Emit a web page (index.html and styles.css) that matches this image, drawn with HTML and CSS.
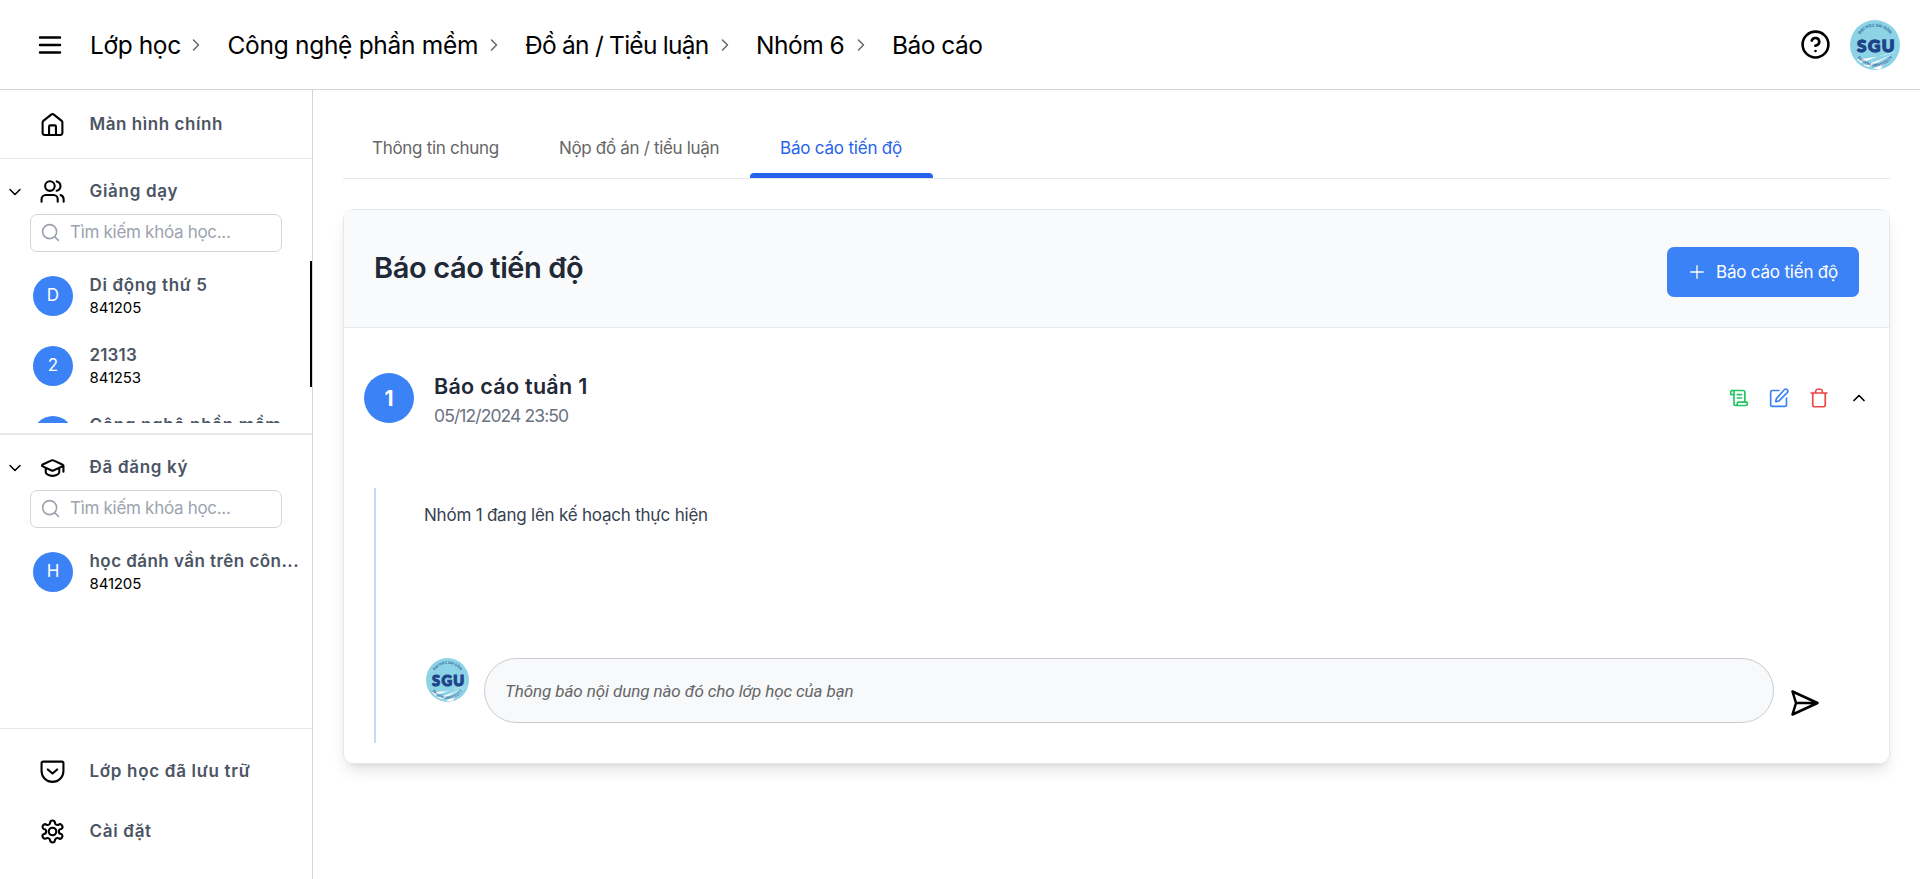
FILE: index.html
```html
<!DOCTYPE html>
<html lang="vi">
<head>
<meta charset="utf-8">
<title>Báo cáo tiến độ</title>
<link rel="stylesheet" href="styles.css">
</head>
<body>
<svg class="defs" width="0" height="0">
  <symbol id="chev-right" viewBox="0 0 24 24"><path d="m9 18 6-6-6-6"/></symbol>
  <symbol id="chev-down" viewBox="0 0 24 24"><path d="m6 9 6 6 6-6"/></symbol>
  <symbol id="search" viewBox="0 0 24 24"><circle cx="11" cy="11" r="8"/><path d="m21 21-4.3-4.3"/></symbol>
</svg>

<header class="topbar">
  <svg class="icon menu" viewBox="0 0 24 24"><path d="M4 6h16M4 12h16M4 18h16"/></svg>
  <nav class="crumbs">
    <span class="crumb c1">Lớp học</span><svg class="icon sep"><use href="#chev-right"/></svg>
    <span class="crumb c2">Công nghệ phần mềm</span><svg class="icon sep"><use href="#chev-right"/></svg>
    <span class="crumb c3">Đồ án / Tiểu luận</span><svg class="icon sep"><use href="#chev-right"/></svg>
    <span class="crumb c4">Nhóm 6</span><svg class="icon sep"><use href="#chev-right"/></svg>
    <span class="crumb c5">Báo cáo</span>
  </nav>
  <svg class="icon help" viewBox="0 0 24 24"><circle cx="12" cy="12" r="10"/><path d="M9.09 9a3 3 0 0 1 5.83 1c0 2-3 3-3 3M12 17h.01"/></svg>
  <svg class="avatar" viewBox="0 0 50 50">
    <path id="arc-top" d="M6.500 25a18.500 18.500 0 0 1 37 0" fill="none"/>
    <path id="arc-bottom" d="M3.500 25a21.500 21.500 0 0 0 43 0" fill="none"/>
    <circle cx="25" cy="25" r="25" fill="#8dd3e6"/>
    <path class="road" d="M7 39Q24 39 48 31Q30 35 11 43zM13 45Q31 41 48 31Q34 39 19 47zM23 49Q36 42 47 32Q37 40 30 49.500z"/>
    <text x="7" y="31.500" class="sgu-name" textLength="37.500">SGU</text>
    <text class="sgu-small"><textPath href="#arc-top" startOffset="50%" text-anchor="middle">ĐẠI HỌC SÀI GÒN</textPath></text>
    <text class="sgu-small"><textPath href="#arc-bottom" startOffset="50%" text-anchor="middle">SAIGON UNIVERSITY</textPath></text>
  </svg>
</header>

<div class="body">
  <aside class="sidebar">
    <div class="home-row nav-row">
      <span class="caret"></span>
      <svg class="icon nav-icon" viewBox="0 0 24 24"><path d="M2.500 10a2 2 0 0 1 .7-1.500l7.500-6a2 2 0 0 1 2.600 0l7.500 6a2 2 0 0 1 .7 1.500V20a2 2 0 0 1-2 2H4.500a2 2 0 0 1-2-2z"/><path d="M8.700 22v-8.200a1 1 0 0 1 1-1h4.600a1 1 0 0 1 1 1V22"/></svg>
      <span class="label l1">Màn hình chính</span>
    </div>
    <section class="group teaching">
      <div class="nav-row">
        <svg class="icon caret"><use href="#chev-down"/></svg>
        <svg class="icon nav-icon" viewBox="0 0 24 24"><path d="M17 21.800v-2.500a4 4 0 0 0-4-4H5.500a4 4 0 0 0-4 4v2.500"/><circle cx="9.500" cy="6.800" r="4.600"/><path d="M22.700 21.800v-2.200a4.500 4.500 0 0 0-3-4.200M16 2.300a4.600 4.600 0 0 1 0 9"/></svg>
        <span class="label l2">Giảng dạy</span>
      </div>
      <div class="search"><svg class="icon"><use href="#search"/></svg><span>Tìm kiếm khóa học...</span></div>
      <div class="list">
        <div class="course"><span class="dot">D</span><div class="info"><b class="k1">Di động thứ 5</b><small>841205</small></div></div>
        <div class="course"><span class="dot">2</span><div class="info"><b class="k2">21313</b><small>841253</small></div></div>
        <div class="course"><span class="dot"></span><div class="info"><b class="k3">Công nghệ phần mềm</b></div></div>
        <i class="thumb"></i>
      </div>
    </section>
    <section class="group enrolled">
      <div class="nav-row">
        <svg class="icon caret"><use href="#chev-down"/></svg>
        <svg class="icon nav-icon" viewBox="0 0 24 24"><path d="M21.420 10.920a1 1 0 0 0-.020-1.840L12.830 5.180a2 2 0 0 0-1.660 0L2.600 9.080a1 1 0 0 0 0 1.830l8.570 3.910a2 2 0 0 0 1.660 0zM22.500 10v6M5.500 12.500V16.500c0 1.500 3 3.500 6.500 3.500s6.500-2 6.500-3.500v-4"/></svg>
        <span class="label l3">Đã đăng ký</span>
      </div>
      <div class="search"><svg class="icon"><use href="#search"/></svg><span>Tìm kiếm khóa học...</span></div>
      <div class="list">
        <div class="course"><span class="dot">H</span><div class="info"><b class="k4">học đánh vần trên côn...</b><small>841205</small></div></div>
      </div>
    </section>
    <footer class="side-foot">
      <div class="nav-row">
        <span class="caret"></span>
        <svg class="icon nav-icon" viewBox="0 0 24 24"><path d="M3 2.500h18a1.500 1.500 0 0 1 1.500 1.500v7.500a10.500 10.500 0 0 1-21 0V4A1.500 1.500 0 0 1 3 2.500z"/><path d="m7.500 10 4.500 4 4.500-4"/></svg>
        <span class="label l4">Lớp học đã lưu trữ</span>
      </div>
      <div class="nav-row">
        <span class="caret"></span>
        <svg class="icon nav-icon" viewBox="0 0 24 24"><path d="M9.670 3.640a2.340 2.340 0 0 1 4.660 0 2.340 2.340 0 0 0 3.320 1.910 2.340 2.340 0 0 1 2.830 4.030 2.340 2.340 0 0 0 0 4.840 2.340 2.340 0 0 1-2.830 4.030 2.340 2.340 0 0 0-3.320 1.920 2.340 2.340 0 0 1-4.660 0 2.340 2.340 0 0 0-3.320-1.920 2.340 2.340 0 0 1-2.830-4.030 2.340 2.340 0 0 0 0-4.840 2.340 2.340 0 0 1 2.830-4.030 2.340 2.340 0 0 0 3.320-1.910"/><circle cx="12" cy="12" r="3.600"/></svg>
        <span class="label l5">Cài đặt</span>
      </div>
    </footer>
  </aside>

  <main class="main">
    <nav class="tabs">
      <span class="tab t1">Thông tin chung</span>
      <span class="tab t2">Nộp đồ án / tiểu luận</span>
      <span class="tab t3 active">Báo cáo tiến độ</span>
    </nav>
    <section class="card">
      <div class="card-head">
        <h1>Báo cáo tiến độ</h1>
        <button class="add"><svg class="icon" viewBox="0 0 24 24"><path d="M4.500 12h15M12 4.500v15"/></svg><span>Báo cáo tiến độ</span></button>
      </div>
      <div class="report">
        <span class="num">1</span>
        <div class="report-info"><h2>Báo cáo tuần 1</h2><time>05/12/2024 23:50</time></div>
        <div class="actions">
          <svg class="icon green" viewBox="0 0 24 24"><path d="M15 12h-5M15 8h-5M19 17V5a2 2 0 0 0-2-2H4"/><path d="M8 21h12a2 2 0 0 0 2-2v-1a1 1 0 0 0-1-1H11a1 1 0 0 0-1 1v1a2 2 0 1 1-4 0V5a2 2 0 1 0-4 0v2a1 1 0 0 0 1 1h3"/></svg>
          <svg class="icon blue" viewBox="0 0 24 24"><path d="M12 3H4a2 2 0 0 0-2 2v15a2 2 0 0 0 2 2h15a2 2 0 0 0 2-2v-8"/><path d="M18.375 2.125a1.500 1.500 0 0 1 3.500 3.500l-9.513 9.514a2 2 0 0 1-.853.505l-2.873.84a.5.5 0 0 1-.62-.62l.84-2.873a2 2 0 0 1 .506-.852z"/></svg>
          <svg class="icon red" viewBox="0 0 24 24"><path d="M2.500 6h19M19.500 6v14.500c0 1-1 2-2 2h-11c-1 0-2-1-2-2V6M8 6V4c0-1 1-2.500 2-2.500h4c1 0 2 1.500 2 2.500v2"/></svg>
          <svg class="icon up" viewBox="0 0 24 24"><path d="m6 15 6-6 6 6"/></svg>
        </div>
      </div>
      <div class="thread">
        <p>Nhóm 1 đang lên kế hoạch thực hiện</p>
        <div class="compose">
          <svg class="avatar-sm" viewBox="0 0 50 50" preserveAspectRatio="none">
            <circle cx="25" cy="25" r="25" fill="#8dd3e6"/>
            <path class="road" d="M7 39Q24 39 48 31Q30 35 11 43zM13 45Q31 41 48 31Q34 39 19 47zM23 49Q36 42 47 32Q37 40 30 49.500z"/>
            <text x="7" y="31.500" class="sgu-name" textLength="37.500">SGU</text>
            <text class="sgu-small"><textPath href="#arc-top" startOffset="50%" text-anchor="middle">ĐẠI HỌC SÀI GÒN</textPath></text>
            <text class="sgu-small"><textPath href="#arc-bottom" startOffset="50%" text-anchor="middle">SAIGON UNIVERSITY</textPath></text>
          </svg>
          <div class="field"><span>Thông báo nội dung nào đó cho lớp học của bạn</span></div>
          <svg class="icon send" viewBox="0 0 28 26"><path d="M1.500 1.500 26.500 13 1.500 24.500 5 13zM5 13h21"/></svg>
        </div>
      </div>
    </section>
  </main>
</div>
</body>
</html>
```
FILE: styles.css
```css
* { box-sizing: border-box; }
body {
  margin: 0;
  height: 879px;
  overflow: hidden;
  background: #fff;
  color: #000;
  font-family: Inter, "Noto Sans", sans-serif;
  font-size: 17px;
}
.defs { position: absolute; }
.icon { fill: none; stroke: currentColor; stroke-width: 2; stroke-linecap: round; stroke-linejoin: round; flex: none; }
.sgu-name { font: 900 17px Lato, Inter, sans-serif; fill: #1d4489; stroke: #1d4489; stroke-width: 1.3; }
.sgu-small { font: 700 4px Inter, sans-serif; fill: #356a9f; }
.road { fill: #fff; }

.topbar { height: 90px; display: flex; align-items: center; border-bottom: 1px solid #d1d5db; padding: 0 20px 0 35px; }
.menu { width: 30px; height: 30px; }
.crumbs { flex: 1; display: flex; align-items: center; margin-left: 25px; font-size: 24.5px; white-space: nowrap; }
.sep { width: 20px; height: 20px; margin: 0 21.5px 0 6px; color: #666; stroke-width: 1.8; }
.c1 { width: 90px; letter-spacing: -.4px; }
.c2 { width: 250px; letter-spacing: -.3px; }
.c3 { width: 183.5px; letter-spacing: -.75px; }
.c4 { width: 88.5px; letter-spacing: -.5px; }
.c5 { letter-spacing: -.5px; }
.help { width: 31px; height: 31px; margin-right: 19px; }
.avatar { width: 50px; height: 50px; }

.body { display: flex; height: 789px; }
.sidebar { width: 313px; flex: none; display: flex; flex-direction: column; border-right: 1px solid #d1d5db; }
.nav-row { display: flex; align-items: center; }
.caret { width: 20px; height: 20px; margin: 0 15px 0 5px; stroke-width: 1.8; flex: none; }
.nav-icon { width: 25px; height: 25px; }
.label { margin-left: 24.5px; font-weight: 600; letter-spacing: .7px; color: #4b5563; white-space: nowrap; }
.l1 { letter-spacing: .55px; }
.home-row { height: 69px; border-bottom: 1px solid #e5e7eb; }
.group { overflow: hidden; }
.teaching { height: 276px; border-bottom: 2px solid #e5e7eb; padding-bottom: 10px; padding-top: 17px; }
.enrolled { height: 293px; padding-top: 17px; }
.group .nav-row { height: 31px; }
.group .label { margin-bottom: 1px; }
.search { height: 38px; width: 252px; margin: 7px 0 0 30px; border: 1px solid #d1d5db; border-radius: 7px; display: flex; align-items: center; padding-left: 9px; color: #9ca3af; white-space: nowrap; }
.search .icon { width: 21px; height: 21px; margin-right: 9px; margin-bottom: 1px; stroke-width: 1.8; }
.search span { letter-spacing: -.3px; margin-bottom: 2px; }
.list { position: relative; height: 171px; overflow: hidden; padding-top: 14px; }
.course { height: 70px; display: flex; padding: 10px 0 0 33px; }
.dot { width: 40px; height: 40px; flex: none; border-radius: 50%; background: #3b82f6; color: #fff; display: grid; place-items: center; padding-bottom: 2px; }
.info { margin-left: 16.5px; display: flex; flex-direction: column; white-space: nowrap; margin-top: -2px; }
.info b { font-weight: 600; color: #4b5563; line-height: 22px; letter-spacing: .65px; }
.info .k2 { letter-spacing: .15px; }
.info .k4 { letter-spacing: .45px; }
.info small { font-size: 15px; line-height: 24px; letter-spacing: -.15px; }
.thumb { position: absolute; right: 0; top: 9px; width: 2px; height: 126px; background: #000; }
.side-foot { border-top: 1px solid #e5e7eb; padding-top: 12px; }
.side-foot .nav-row { height: 60px; }

.main { flex: 1; padding: 30px 30px 0 30px; }
.tabs { display: flex; height: 59px; border-bottom: 1px solid #e5e7eb; }
.tab { display: flex; flex-direction: column; justify-content: space-between; padding-top: 18px; line-height: 20px; color: #666; text-indent: 29px; white-space: nowrap; }
.t1 { width: 187px; letter-spacing: -.3px; }
.t2 { width: 220px; letter-spacing: -.33px; }
.t3 { width: 183px; letter-spacing: -.2px; text-indent: 30px; }
.tab.active { color: #2563eb; }
.tab.active::after { content: ""; height: 5px; border-radius: 4px 4px 0 0; background: #2563eb; }
.card { margin-top: 30px; height: 555px; border: 1px solid #e5e7eb; border-radius: 10px; box-shadow: 0 10px 15px -3px rgba(0,0,0,.1), 0 4px 6px -4px rgba(0,0,0,.1); }
.card-head { height: 118px; background: #f9fafb; border-bottom: 1px solid #e5e7eb; display: flex; justify-content: space-between; padding: 37px 30px 0; }
h1 { margin: 1px 0 0; font-size: 29px; font-weight: 600; line-height: 40px; color: #1f2937; letter-spacing: -.4px; }
.add { width: 192px; height: 50px; border: 0; border-radius: 7px; background: #3b82f6; color: #fff; font: 17px Inter, sans-serif; display: flex; align-items: center; padding: 0 0 0 20px; white-space: nowrap; }
.add .icon { width: 20px; height: 20px; margin-right: 9px; stroke-width: 1.6; }
.add span { letter-spacing: -.2px; }
.report { display: flex; align-items: center; padding: 35px 20px 0; height: 105px; }
.num { width: 50px; height: 50px; border-radius: 50%; background: #3b82f6; color: #fff; font-size: 21px; font-weight: 700; display: grid; place-items: center; }
.report-info { margin: 4px 0 0 20px; flex: 1; }
h2 { margin: 0; font-size: 21.5px; font-weight: 600; line-height: 30px; color: #1f2937; letter-spacing: .3px; }
time { display: block; font-size: 17.5px; line-height: 29px; color: #6b7280; letter-spacing: -.9px; }
.actions { display: flex; gap: 20px; }
.actions .icon { width: 20px; height: 20px; }
.green { color: #22c55e; } .blue { color: #3b82f6; } .red { color: #ef4444; }
.thread { margin: 55px 30px 0; height: 255px; border-left: 2px solid #bfdbfe; padding: 15px 0 0 48px; }
.thread p { margin: 0; line-height: 24px; color: #374151; letter-spacing: -.22px; }
.compose { display: flex; margin-top: 131px; }
.avatar-sm { width: 43px; height: 44px; flex: none; margin: 0 15px 0 2px; }
.field { width: 1290px; height: 65px; border: 1px solid #c9cbd0; border-radius: 33px; background: #f8f9fb; padding-left: 20px; display: flex; align-items: center; font: italic 17px Roboto, sans-serif; letter-spacing: -.1px; color: #666; }
.send { width: 28px; height: 26px; margin: 32px 0 0 17px; stroke-width: 2.5; }
```
